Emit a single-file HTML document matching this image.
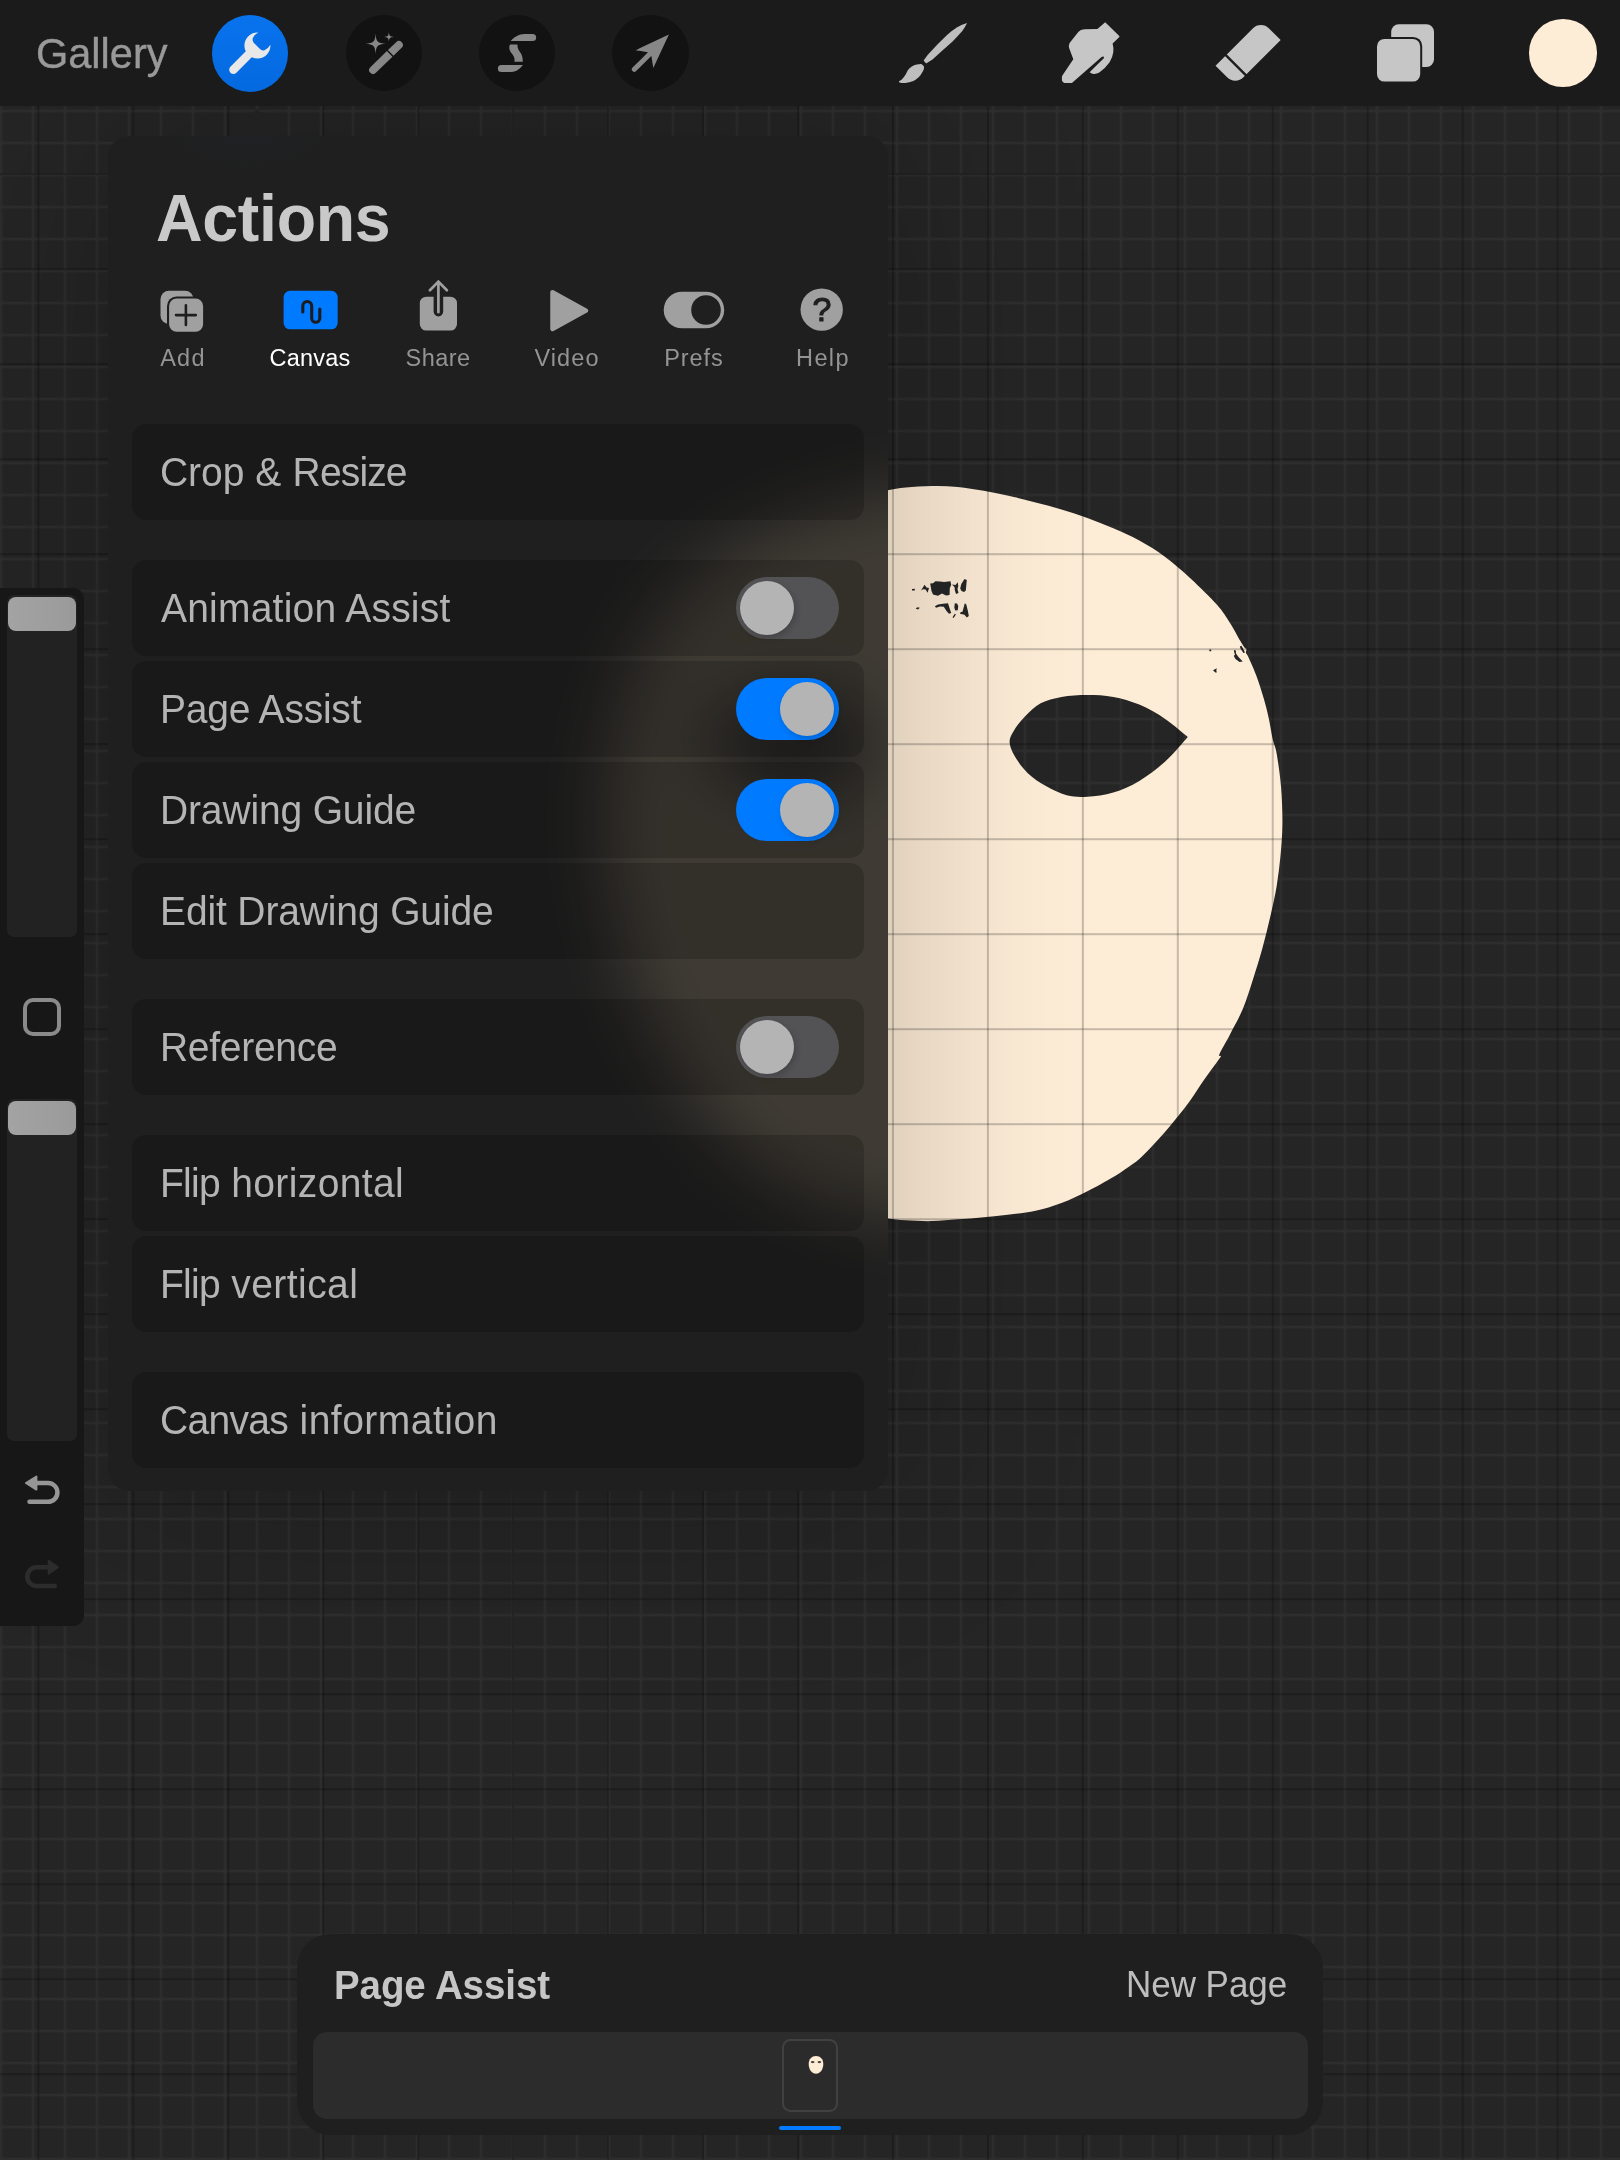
<!DOCTYPE html>
<html lang="en">
<head>
<meta charset="utf-8">
<title>Procreate – Actions</title>
<style>
*{box-sizing:border-box;margin:0;padding:0}
html,body{width:1620px;height:2160px;overflow:hidden;background:#252525}
body{position:relative;font-family:"Liberation Sans",Arial,Helvetica,sans-serif;color:#b4b4b4}
.abs{position:absolute}
.lbl,.tab,h1,h2,#newpage,#gallery,#tabicons{will-change:transform}
#canvas{position:absolute;left:0;top:0;width:1620px;height:2160px}
#topbar{position:absolute;left:0;top:0;width:1620px;height:105.5px;background:#1b1b1b}
#gallery{position:absolute;left:36px;top:28.7px;font-size:41.5px;line-height:48px;color:#999;letter-spacing:0px;-webkit-text-stroke:0.4px #999;transform:scaleY(1.045);transform-origin:0 50%}
.circ{position:absolute;top:14.6px;width:76.4px;height:76.4px;border-radius:50%;background:#121212}
#topicons{position:absolute;left:0;top:0;width:1620px;height:106px}
#swatch{position:absolute;left:1529px;top:19px;width:67.5px;height:67.5px;border-radius:50%;background:#fdecd6}
/* sidebar */
#side{position:absolute;left:0;top:588px;width:84px;height:1037.5px;background:#171717;border-radius:0 11px 11px 0}
.track{position:absolute;left:7px;width:70px;height:342px;background:#222;border-radius:7px}
.knob{position:absolute;left:8px;width:68px;height:34px;background:linear-gradient(90deg,#a3a3a3,#9a9a9a);border-radius:8px}
#sq{position:absolute;left:23px;top:410.2px;width:38px;height:38.3px;border:4px solid #8a8a8a;border-radius:10px}
/* panel */
#panel{position:absolute;left:108px;top:136px;width:780px;height:1355px;border-radius:21px;background:radial-gradient(ellipse 85px 34px at 142px 0px,rgba(40,80,140,0.05),rgba(40,80,140,0) 100%),#1f1f1f;overflow:hidden;}
#pshadow{position:absolute;left:108px;top:136px;width:780px;height:1355px;border-radius:21px;box-shadow:0 0 200px 0 rgba(0,0,0,0.23)}
#arrow{position:absolute;left:229.5px;top:109px;width:0;height:0;border-left:27px solid transparent;border-right:27px solid transparent;border-bottom:27px solid #212121}
#glow{position:absolute;left:0;top:0;width:780px;height:1355px}
h1{position:absolute;left:48px;top:44.5px;font-size:64.5px;line-height:74px;font-weight:700;color:#c9c9c9;letter-spacing:-0.3px;transform:scaleY(1.04);transform-origin:0 50%}
.tab{position:absolute;top:207.5px;font-size:23.5px;line-height:28px;color:#949494;white-space:nowrap;transform:translateX(-50%)}
.tab.act{color:#fff}
#tabicons{position:absolute;left:0;top:0;width:780px;height:230px}
.row{position:absolute;left:24px;width:732px;height:96px;border-radius:14px;background:rgba(0,0,0,0.175)}
.lbl{position:absolute;left:28.4px;top:0.3px;font-size:39px;line-height:96px;transform:scaleY(1.045);transform-origin:0 50%;color:#b4b4b4;white-space:nowrap}
.tog{position:absolute;left:604px;top:17px;width:103px;height:62px;border-radius:31px;background:#535355}
.tog.on{background:#007aff}
.tog i{position:absolute;top:4px;left:4px;width:54px;height:54px;border-radius:50%;background:#b4b4b4;box-shadow:2px 3px 6px rgba(0,0,0,0.18)}
.tog.on i{left:44.2px}
/* page assist */
#pa{position:absolute;left:297px;top:1934px;width:1026px;height:201px;border-radius:34px;background:#1f1f1f}
#pa h2{position:absolute;left:36.9px;top:28.4px;font-size:38.5px;line-height:46px;font-weight:700;color:#c6c6c6;letter-spacing:-0.08px;transform:scaleY(1.045);transform-origin:0 50%}
#newpage{position:absolute;right:36.2px;top:27.6px;font-size:35px;line-height:44px;color:#bdbdbd;letter-spacing:-0.04px;transform:scaleY(1.05);transform-origin:100% 50%}
#strip{position:absolute;left:16px;top:98px;width:994.5px;height:87px;border-radius:14px;background:#2c2c2c}
#thumb{position:absolute;left:485px;top:104.6px;width:56px;height:73.4px;border:2px solid #414141;border-radius:8.5px;background:#2b2b2b}
#bluebar{position:absolute;left:482px;top:191.9px;width:62px;height:4.1px;background:#027bff;border-radius:2px}
</style>
</head>
<body>
<svg id="canvas" viewBox="0 0 1620 2160">
<defs>
<linearGradient id="fshade" gradientUnits="userSpaceOnUse" x1="888" y1="0" x2="1090" y2="0">
<stop offset="0" stop-color="#000" stop-opacity="0.135"/>
<stop offset="0.5" stop-color="#000" stop-opacity="0.055"/>
<stop offset="1" stop-color="#000" stop-opacity="0"/>
</linearGradient>
</defs>
<g fill="#323232">
<g fill-opacity="0.42">
<rect x="-0.7" y="105" width="3.4" height="2055"/>
<rect x="31.3" y="105" width="3.4" height="2055"/>
<rect x="63.3" y="105" width="3.4" height="2055"/>
<rect x="95.3" y="105" width="3.4" height="2055"/>
<rect x="127.3" y="105" width="3.4" height="2055"/>
<rect x="159.3" y="105" width="3.4" height="2055"/>
<rect x="191.3" y="105" width="3.4" height="2055"/>
<rect x="223.3" y="105" width="3.4" height="2055"/>
<rect x="255.3" y="105" width="3.4" height="2055"/>
<rect x="287.3" y="105" width="3.4" height="2055"/>
<rect x="319.3" y="105" width="3.4" height="2055"/>
<rect x="351.3" y="105" width="3.4" height="2055"/>
<rect x="383.3" y="105" width="3.4" height="2055"/>
<rect x="415.3" y="105" width="3.4" height="2055"/>
<rect x="447.3" y="105" width="3.4" height="2055"/>
<rect x="479.3" y="105" width="3.4" height="2055"/>
<rect x="511.3" y="105" width="3.4" height="2055"/>
<rect x="543.3" y="105" width="3.4" height="2055"/>
<rect x="575.3" y="105" width="3.4" height="2055"/>
<rect x="607.3" y="105" width="3.4" height="2055"/>
<rect x="639.3" y="105" width="3.4" height="2055"/>
<rect x="671.3" y="105" width="3.4" height="2055"/>
<rect x="703.3" y="105" width="3.4" height="2055"/>
<rect x="735.3" y="105" width="3.4" height="2055"/>
<rect x="767.3" y="105" width="3.4" height="2055"/>
<rect x="799.3" y="105" width="3.4" height="2055"/>
<rect x="831.3" y="105" width="3.4" height="2055"/>
<rect x="863.3" y="105" width="3.4" height="2055"/>
<rect x="895.3" y="105" width="3.4" height="2055"/>
<rect x="927.3" y="105" width="3.4" height="2055"/>
<rect x="959.3" y="105" width="3.4" height="2055"/>
<rect x="991.3" y="105" width="3.4" height="2055"/>
<rect x="1023.3" y="105" width="3.4" height="2055"/>
<rect x="1055.3" y="105" width="3.4" height="2055"/>
<rect x="1087.3" y="105" width="3.4" height="2055"/>
<rect x="1119.3" y="105" width="3.4" height="2055"/>
<rect x="1151.3" y="105" width="3.4" height="2055"/>
<rect x="1183.3" y="105" width="3.4" height="2055"/>
<rect x="1215.3" y="105" width="3.4" height="2055"/>
<rect x="1247.3" y="105" width="3.4" height="2055"/>
<rect x="1279.3" y="105" width="3.4" height="2055"/>
<rect x="1311.3" y="105" width="3.4" height="2055"/>
<rect x="1343.3" y="105" width="3.4" height="2055"/>
<rect x="1375.3" y="105" width="3.4" height="2055"/>
<rect x="1407.3" y="105" width="3.4" height="2055"/>
<rect x="1439.3" y="105" width="3.4" height="2055"/>
<rect x="1471.3" y="105" width="3.4" height="2055"/>
<rect x="1503.3" y="105" width="3.4" height="2055"/>
<rect x="1535.3" y="105" width="3.4" height="2055"/>
<rect x="1567.3" y="105" width="3.4" height="2055"/>
<rect x="1599.3" y="105" width="3.4" height="2055"/>
<rect x="0" y="109.3" width="1620" height="3.4"/>
<rect x="0" y="141.3" width="1620" height="3.4"/>
<rect x="0" y="173.3" width="1620" height="3.4"/>
<rect x="0" y="205.3" width="1620" height="3.4"/>
<rect x="0" y="237.3" width="1620" height="3.4"/>
<rect x="0" y="269.3" width="1620" height="3.4"/>
<rect x="0" y="301.3" width="1620" height="3.4"/>
<rect x="0" y="333.3" width="1620" height="3.4"/>
<rect x="0" y="365.3" width="1620" height="3.4"/>
<rect x="0" y="397.3" width="1620" height="3.4"/>
<rect x="0" y="429.3" width="1620" height="3.4"/>
<rect x="0" y="461.3" width="1620" height="3.4"/>
<rect x="0" y="493.3" width="1620" height="3.4"/>
<rect x="0" y="525.3" width="1620" height="3.4"/>
<rect x="0" y="557.3" width="1620" height="3.4"/>
<rect x="0" y="589.3" width="1620" height="3.4"/>
<rect x="0" y="621.3" width="1620" height="3.4"/>
<rect x="0" y="653.3" width="1620" height="3.4"/>
<rect x="0" y="685.3" width="1620" height="3.4"/>
<rect x="0" y="717.3" width="1620" height="3.4"/>
<rect x="0" y="749.3" width="1620" height="3.4"/>
<rect x="0" y="781.3" width="1620" height="3.4"/>
<rect x="0" y="813.3" width="1620" height="3.4"/>
<rect x="0" y="845.3" width="1620" height="3.4"/>
<rect x="0" y="877.3" width="1620" height="3.4"/>
<rect x="0" y="909.3" width="1620" height="3.4"/>
<rect x="0" y="941.3" width="1620" height="3.4"/>
<rect x="0" y="973.3" width="1620" height="3.4"/>
<rect x="0" y="1005.3" width="1620" height="3.4"/>
<rect x="0" y="1037.3" width="1620" height="3.4"/>
<rect x="0" y="1069.3" width="1620" height="3.4"/>
<rect x="0" y="1101.3" width="1620" height="3.4"/>
<rect x="0" y="1133.3" width="1620" height="3.4"/>
<rect x="0" y="1165.3" width="1620" height="3.4"/>
<rect x="0" y="1197.3" width="1620" height="3.4"/>
<rect x="0" y="1229.3" width="1620" height="3.4"/>
<rect x="0" y="1261.3" width="1620" height="3.4"/>
<rect x="0" y="1293.3" width="1620" height="3.4"/>
<rect x="0" y="1325.3" width="1620" height="3.4"/>
<rect x="0" y="1357.3" width="1620" height="3.4"/>
<rect x="0" y="1389.3" width="1620" height="3.4"/>
<rect x="0" y="1421.3" width="1620" height="3.4"/>
<rect x="0" y="1453.3" width="1620" height="3.4"/>
<rect x="0" y="1485.3" width="1620" height="3.4"/>
<rect x="0" y="1517.3" width="1620" height="3.4"/>
<rect x="0" y="1549.3" width="1620" height="3.4"/>
<rect x="0" y="1581.3" width="1620" height="3.4"/>
<rect x="0" y="1613.3" width="1620" height="3.4"/>
<rect x="0" y="1645.3" width="1620" height="3.4"/>
<rect x="0" y="1677.3" width="1620" height="3.4"/>
<rect x="0" y="1709.3" width="1620" height="3.4"/>
<rect x="0" y="1741.3" width="1620" height="3.4"/>
<rect x="0" y="1773.3" width="1620" height="3.4"/>
<rect x="0" y="1805.3" width="1620" height="3.4"/>
<rect x="0" y="1837.3" width="1620" height="3.4"/>
<rect x="0" y="1869.3" width="1620" height="3.4"/>
<rect x="0" y="1901.3" width="1620" height="3.4"/>
<rect x="0" y="1933.3" width="1620" height="3.4"/>
<rect x="0" y="1965.3" width="1620" height="3.4"/>
<rect x="0" y="1997.3" width="1620" height="3.4"/>
<rect x="0" y="2029.3" width="1620" height="3.4"/>
<rect x="0" y="2061.3" width="1620" height="3.4"/>
<rect x="0" y="2093.3" width="1620" height="3.4"/>
<rect x="0" y="2125.3" width="1620" height="3.4"/>
<rect x="0" y="2157.3" width="1620" height="3.4"/>
</g><g fill-opacity="0.62">
<rect x="0.1" y="105" width="1.8" height="2055"/>
<rect x="32.1" y="105" width="1.8" height="2055"/>
<rect x="64.1" y="105" width="1.8" height="2055"/>
<rect x="96.1" y="105" width="1.8" height="2055"/>
<rect x="128.1" y="105" width="1.8" height="2055"/>
<rect x="160.1" y="105" width="1.8" height="2055"/>
<rect x="192.1" y="105" width="1.8" height="2055"/>
<rect x="224.1" y="105" width="1.8" height="2055"/>
<rect x="256.1" y="105" width="1.8" height="2055"/>
<rect x="288.1" y="105" width="1.8" height="2055"/>
<rect x="320.1" y="105" width="1.8" height="2055"/>
<rect x="352.1" y="105" width="1.8" height="2055"/>
<rect x="384.1" y="105" width="1.8" height="2055"/>
<rect x="416.1" y="105" width="1.8" height="2055"/>
<rect x="448.1" y="105" width="1.8" height="2055"/>
<rect x="480.1" y="105" width="1.8" height="2055"/>
<rect x="512.1" y="105" width="1.8" height="2055"/>
<rect x="544.1" y="105" width="1.8" height="2055"/>
<rect x="576.1" y="105" width="1.8" height="2055"/>
<rect x="608.1" y="105" width="1.8" height="2055"/>
<rect x="640.1" y="105" width="1.8" height="2055"/>
<rect x="672.1" y="105" width="1.8" height="2055"/>
<rect x="704.1" y="105" width="1.8" height="2055"/>
<rect x="736.1" y="105" width="1.8" height="2055"/>
<rect x="768.1" y="105" width="1.8" height="2055"/>
<rect x="800.1" y="105" width="1.8" height="2055"/>
<rect x="832.1" y="105" width="1.8" height="2055"/>
<rect x="864.1" y="105" width="1.8" height="2055"/>
<rect x="896.1" y="105" width="1.8" height="2055"/>
<rect x="928.1" y="105" width="1.8" height="2055"/>
<rect x="960.1" y="105" width="1.8" height="2055"/>
<rect x="992.1" y="105" width="1.8" height="2055"/>
<rect x="1024.1" y="105" width="1.8" height="2055"/>
<rect x="1056.1" y="105" width="1.8" height="2055"/>
<rect x="1088.1" y="105" width="1.8" height="2055"/>
<rect x="1120.1" y="105" width="1.8" height="2055"/>
<rect x="1152.1" y="105" width="1.8" height="2055"/>
<rect x="1184.1" y="105" width="1.8" height="2055"/>
<rect x="1216.1" y="105" width="1.8" height="2055"/>
<rect x="1248.1" y="105" width="1.8" height="2055"/>
<rect x="1280.1" y="105" width="1.8" height="2055"/>
<rect x="1312.1" y="105" width="1.8" height="2055"/>
<rect x="1344.1" y="105" width="1.8" height="2055"/>
<rect x="1376.1" y="105" width="1.8" height="2055"/>
<rect x="1408.1" y="105" width="1.8" height="2055"/>
<rect x="1440.1" y="105" width="1.8" height="2055"/>
<rect x="1472.1" y="105" width="1.8" height="2055"/>
<rect x="1504.1" y="105" width="1.8" height="2055"/>
<rect x="1536.1" y="105" width="1.8" height="2055"/>
<rect x="1568.1" y="105" width="1.8" height="2055"/>
<rect x="1600.1" y="105" width="1.8" height="2055"/>
<rect x="0" y="110.1" width="1620" height="1.8"/>
<rect x="0" y="142.1" width="1620" height="1.8"/>
<rect x="0" y="174.1" width="1620" height="1.8"/>
<rect x="0" y="206.1" width="1620" height="1.8"/>
<rect x="0" y="238.1" width="1620" height="1.8"/>
<rect x="0" y="270.1" width="1620" height="1.8"/>
<rect x="0" y="302.1" width="1620" height="1.8"/>
<rect x="0" y="334.1" width="1620" height="1.8"/>
<rect x="0" y="366.1" width="1620" height="1.8"/>
<rect x="0" y="398.1" width="1620" height="1.8"/>
<rect x="0" y="430.1" width="1620" height="1.8"/>
<rect x="0" y="462.1" width="1620" height="1.8"/>
<rect x="0" y="494.1" width="1620" height="1.8"/>
<rect x="0" y="526.1" width="1620" height="1.8"/>
<rect x="0" y="558.1" width="1620" height="1.8"/>
<rect x="0" y="590.1" width="1620" height="1.8"/>
<rect x="0" y="622.1" width="1620" height="1.8"/>
<rect x="0" y="654.1" width="1620" height="1.8"/>
<rect x="0" y="686.1" width="1620" height="1.8"/>
<rect x="0" y="718.1" width="1620" height="1.8"/>
<rect x="0" y="750.1" width="1620" height="1.8"/>
<rect x="0" y="782.1" width="1620" height="1.8"/>
<rect x="0" y="814.1" width="1620" height="1.8"/>
<rect x="0" y="846.1" width="1620" height="1.8"/>
<rect x="0" y="878.1" width="1620" height="1.8"/>
<rect x="0" y="910.1" width="1620" height="1.8"/>
<rect x="0" y="942.1" width="1620" height="1.8"/>
<rect x="0" y="974.1" width="1620" height="1.8"/>
<rect x="0" y="1006.1" width="1620" height="1.8"/>
<rect x="0" y="1038.1" width="1620" height="1.8"/>
<rect x="0" y="1070.1" width="1620" height="1.8"/>
<rect x="0" y="1102.1" width="1620" height="1.8"/>
<rect x="0" y="1134.1" width="1620" height="1.8"/>
<rect x="0" y="1166.1" width="1620" height="1.8"/>
<rect x="0" y="1198.1" width="1620" height="1.8"/>
<rect x="0" y="1230.1" width="1620" height="1.8"/>
<rect x="0" y="1262.1" width="1620" height="1.8"/>
<rect x="0" y="1294.1" width="1620" height="1.8"/>
<rect x="0" y="1326.1" width="1620" height="1.8"/>
<rect x="0" y="1358.1" width="1620" height="1.8"/>
<rect x="0" y="1390.1" width="1620" height="1.8"/>
<rect x="0" y="1422.1" width="1620" height="1.8"/>
<rect x="0" y="1454.1" width="1620" height="1.8"/>
<rect x="0" y="1486.1" width="1620" height="1.8"/>
<rect x="0" y="1518.1" width="1620" height="1.8"/>
<rect x="0" y="1550.1" width="1620" height="1.8"/>
<rect x="0" y="1582.1" width="1620" height="1.8"/>
<rect x="0" y="1614.1" width="1620" height="1.8"/>
<rect x="0" y="1646.1" width="1620" height="1.8"/>
<rect x="0" y="1678.1" width="1620" height="1.8"/>
<rect x="0" y="1710.1" width="1620" height="1.8"/>
<rect x="0" y="1742.1" width="1620" height="1.8"/>
<rect x="0" y="1774.1" width="1620" height="1.8"/>
<rect x="0" y="1806.1" width="1620" height="1.8"/>
<rect x="0" y="1838.1" width="1620" height="1.8"/>
<rect x="0" y="1870.1" width="1620" height="1.8"/>
<rect x="0" y="1902.1" width="1620" height="1.8"/>
<rect x="0" y="1934.1" width="1620" height="1.8"/>
<rect x="0" y="1966.1" width="1620" height="1.8"/>
<rect x="0" y="1998.1" width="1620" height="1.8"/>
<rect x="0" y="2030.1" width="1620" height="1.8"/>
<rect x="0" y="2062.1" width="1620" height="1.8"/>
<rect x="0" y="2094.1" width="1620" height="1.8"/>
<rect x="0" y="2126.1" width="1620" height="1.8"/>
<rect x="0" y="2158.1" width="1620" height="1.8"/>
</g>
</g>
<path d="M860.0 494.5C862.3 494.1 869.4 492.9 874.0 492.2C878.6 491.5 882.5 491.0 887.8 490.2C893.1 489.4 898.5 488.3 905.9 487.6C913.2 486.9 923.2 486.2 931.9 486.1C940.5 486.0 949.2 486.1 957.8 486.9C966.4 487.7 975.1 489.2 983.7 490.7C992.3 492.2 1001.0 493.9 1009.6 495.9C1018.2 497.8 1026.9 500.1 1035.6 502.4C1044.2 504.6 1052.9 506.8 1061.5 509.4C1070.1 512.0 1078.8 514.9 1087.4 518.0C1096.0 521.1 1104.7 524.5 1113.3 528.3C1121.9 532.0 1130.6 535.7 1139.3 540.5C1148.0 545.3 1156.6 550.5 1165.2 556.9C1173.8 563.3 1182.5 570.9 1191.1 578.9C1199.7 586.9 1210.5 597.4 1217.0 604.8C1223.5 612.1 1226.1 617.0 1230.0 623.0C1233.9 629.0 1238.0 637.0 1240.4 641.1C1242.8 645.2 1243.5 646.2 1244.5 647.5C1245.5 648.8 1246.2 648.1 1246.4 649.0C1246.7 649.9 1245.7 651.7 1246.0 653.0C1246.3 654.3 1246.5 653.1 1248.2 656.7C1249.9 660.3 1253.4 667.9 1256.0 674.8C1258.6 681.7 1261.5 690.9 1263.7 698.2C1265.9 705.6 1267.4 712.0 1268.9 718.9C1270.4 725.8 1271.5 733.8 1272.8 739.6C1274.1 745.4 1275.3 745.7 1276.7 753.7C1278.1 761.7 1280.1 775.7 1281.1 787.4C1282.0 799.1 1282.5 812.5 1282.4 823.7C1282.3 834.9 1281.5 844.4 1280.6 854.8C1279.6 865.2 1278.4 875.5 1276.7 885.9C1275.0 896.3 1272.6 906.6 1270.2 917.0C1267.8 927.4 1265.2 938.0 1262.4 948.2C1259.6 958.4 1256.6 968.0 1253.4 978.0C1250.2 988.0 1246.9 999.1 1243.0 1008.5C1239.1 1017.9 1233.9 1026.8 1230.0 1034.4C1226.1 1042.0 1221.0 1050.4 1219.5 1054.0C1218.0 1057.6 1221.4 1054.7 1221.0 1056.0C1220.6 1057.3 1219.8 1058.0 1217.0 1062.0C1214.2 1066.0 1208.4 1073.6 1204.1 1079.8C1199.8 1086.0 1195.4 1093.2 1191.1 1099.3C1186.8 1105.3 1182.5 1110.7 1178.2 1116.1C1173.9 1121.5 1169.5 1126.7 1165.2 1131.7C1160.9 1136.7 1156.5 1141.4 1152.2 1145.9C1147.9 1150.4 1143.6 1155.1 1139.3 1158.9C1135.0 1162.7 1130.6 1165.5 1126.3 1168.5C1122.0 1171.5 1119.8 1173.2 1113.3 1177.0C1106.8 1180.8 1096.0 1187.0 1087.4 1191.3C1078.8 1195.6 1070.1 1199.8 1061.5 1203.0C1052.9 1206.2 1044.2 1208.9 1035.6 1210.8C1026.9 1212.7 1018.2 1213.5 1009.6 1214.6C1001.0 1215.7 992.3 1216.4 983.7 1217.2C975.1 1218.0 966.4 1218.7 957.8 1219.3C949.2 1219.9 940.5 1220.9 931.9 1221.1C923.2 1221.3 913.2 1220.7 905.9 1220.3C898.5 1219.9 893.1 1219.1 887.8 1218.5C882.5 1217.9 878.6 1217.4 874.0 1216.8C869.4 1216.2 862.3 1215.3 860.0 1215.0Z M1187.8 736.9C1184.0 733.9 1173.3 724.3 1165.2 718.9C1157.1 713.5 1148.0 708.3 1139.3 704.6C1130.6 700.9 1121.9 698.5 1113.3 696.9C1104.7 695.3 1096.0 695.0 1087.4 695.0C1078.8 695.0 1069.3 695.5 1061.5 696.9C1053.7 698.3 1046.8 700.1 1040.7 703.3C1034.7 706.5 1029.7 711.8 1025.2 716.3C1020.8 720.8 1016.6 726.1 1014.0 730.4C1011.4 734.7 1009.5 737.7 1009.6 742.0C1009.7 746.3 1011.8 751.1 1014.8 756.3C1017.8 761.5 1022.6 768.2 1027.8 773.2C1033.0 778.2 1039.4 782.4 1045.9 786.1C1052.4 789.8 1059.8 793.4 1066.7 795.2C1073.6 797.0 1079.6 797.1 1087.4 796.7C1095.2 796.3 1104.7 795.2 1113.3 792.6C1121.9 790.0 1130.6 786.1 1139.3 780.9C1148.0 775.7 1157.1 768.8 1165.2 761.5C1173.3 754.2 1184.0 741.0 1187.8 736.9Z" fill="#fdecd6" fill-rule="evenodd"/>
<path d="M912.0 589.0L914.8 588.7L914.8 590.6L912.0 590.6Z M921.0 590.5L924.6 584.7L926.5 587.5L929.0 588.0L927.6 592.7L925.6 589.5L923.0 589.2Z M930.2 583.5L933.0 583.2L935.5 581.2L940.0 581.6L944.0 582.0L950.5 581.2L951.2 585.0L949.8 588.0L949.6 595.0L946.0 595.6L942.0 593.4L938.0 595.8L933.0 594.6L931.5 591.0Z M951.9 584.5L955.5 585.0L957.7 582.2L958.3 586.0L957.5 589.0L958.5 593.0L956.0 594.0L954.8 590.0L954.5 587.0Z M964.5 579.0L966.8 580.0L965.8 590.5L964.0 592.0L961.5 591.0L960.2 588.5L961.3 584.0Z M915.7 608.6L917.5 607.2L919.8 607.8L918.0 609.4Z M934.9 606.3L938.0 604.5L943.0 603.8L948.0 603.2L949.5 608.0L951.2 613.0L949.0 613.7L946.5 611.0L943.8 606.8L940.0 606.6L936.0 607.8Z M954.8 603.2L957.0 603.4L958.3 606.0L957.7 610.2L955.2 610.6L954.3 607.5Z M954.8 613.7L955.9 614.5L953.6 618.0L952.5 617.3Z M964.8 603.2L966.3 604.5L968.0 611.5L968.8 616.0L966.8 617.4L964.5 614.8L960.0 613.8L960.5 612.3L962.5 611.8Z M1234.5 649.8L1235.8 650.5L1236.0 653.5L1238.5 657.0L1242.7 661.5L1239.5 662.1L1235.5 659.0L1233.8 656.0L1235.0 654.5L1233.9 651.5Z M1213.0 670.3L1216.8 668.3L1216.3 670.6L1216.8 672.6L1215.3 672.4Z M1209.4 649.4L1211.2 649.4L1211.2 651.3L1209.4 651.3Z M1239.8 646.5L1241.5 645.8L1243.0 648.5L1245.0 652.5L1243.3 652.9L1242.0 650.7L1240.6 648.8Z" fill="#262626"/>
<g fill="#000" fill-opacity="0.215">
<rect x="37.40" y="105" width="2" height="2055"/>
<rect x="132.35" y="105" width="2" height="2055"/>
<rect x="227.30" y="105" width="2" height="2055"/>
<rect x="322.25" y="105" width="2" height="2055"/>
<rect x="417.20" y="105" width="2" height="2055"/>
<rect x="512.15" y="105" width="2" height="2055"/>
<rect x="607.10" y="105" width="2" height="2055"/>
<rect x="702.05" y="105" width="2" height="2055"/>
<rect x="797.00" y="105" width="2" height="2055"/>
<rect x="891.95" y="105" width="2" height="2055"/>
<rect x="986.90" y="105" width="2" height="2055"/>
<rect x="1081.85" y="105" width="2" height="2055"/>
<rect x="1176.80" y="105" width="2" height="2055"/>
<rect x="1271.75" y="105" width="2" height="2055"/>
<rect x="1366.70" y="105" width="2" height="2055"/>
<rect x="1461.65" y="105" width="2" height="2055"/>
<rect x="1556.60" y="105" width="2" height="2055"/>
<rect x="0" y="173.20" width="1620" height="2"/>
<rect x="0" y="268.20" width="1620" height="2"/>
<rect x="0" y="363.20" width="1620" height="2"/>
<rect x="0" y="458.20" width="1620" height="2"/>
<rect x="0" y="553.20" width="1620" height="2"/>
<rect x="0" y="648.20" width="1620" height="2"/>
<rect x="0" y="743.20" width="1620" height="2"/>
<rect x="0" y="838.20" width="1620" height="2"/>
<rect x="0" y="933.20" width="1620" height="2"/>
<rect x="0" y="1028.20" width="1620" height="2"/>
<rect x="0" y="1123.20" width="1620" height="2"/>
<rect x="0" y="1218.20" width="1620" height="2"/>
<rect x="0" y="1313.20" width="1620" height="2"/>
<rect x="0" y="1408.20" width="1620" height="2"/>
<rect x="0" y="1503.20" width="1620" height="2"/>
<rect x="0" y="1598.20" width="1620" height="2"/>
<rect x="0" y="1693.20" width="1620" height="2"/>
<rect x="0" y="1788.20" width="1620" height="2"/>
<rect x="0" y="1883.20" width="1620" height="2"/>
<rect x="0" y="1978.20" width="1620" height="2"/>
<rect x="0" y="2073.20" width="1620" height="2"/>
</g>
</svg>

<div id="pshadow"></div>
<div id="topbar"></div>
<div id="gallery">Gallery</div>
<div class="circ" style="left:211.7px;top:14.75px;width:76.8px;height:76.8px;background:linear-gradient(180deg,#0873ee,#0469df)"></div>
<div class="circ" style="left:345.6px"></div>
<div class="circ" style="left:478.9px"></div>
<div class="circ" style="left:612.4px"></div>
<svg id="topicons" viewBox="0 0 1620 106">
<!-- wrench -->
<g fill="#e8e8e8" stroke="none">
<path d="M258.2 32.6A13 13 0 1 0 270.4 44.8Q268 49 264.5 50.3Q261.8 51 260 49L253.5 42.5Q251.8 40.5 252.8 38Q254.5 34.5 258.2 32.6Z"/>
<path d="M233.4 69.7L250.5 52.5" stroke="#e8e8e8" stroke-width="8.4" stroke-linecap="round"/>
</g>
<!-- wand -->
<g fill="#878787">
<g transform="translate(373.1 70) rotate(-44.1)">
<path d="M0 -3.95H23.1V3.95H0A3.95 3.95 0 0 1 0 -3.95Z"/>
<path d="M24.5 -3.95H35.9A3.95 3.95 0 0 1 35.9 3.95H24.5Z"/>
</g>
<path d="M375.60 33.50C376.10 41.70 377.60 43.20 385.80 43.70C377.60 44.20 376.10 45.70 375.60 53.90C375.10 45.70 373.60 44.20 365.40 43.70C373.60 43.20 375.10 41.70 375.60 33.50Z"/>
<path d="M388.90 32.10C389.20 36.00 389.90 36.70 393.80 37.00C389.90 37.30 389.20 38.00 388.90 41.90C388.60 38.00 387.90 37.30 384.00 37.00C387.90 36.70 388.60 36.00 388.90 32.10Z"/>
</g>
<!-- S -->
<g fill="#878787">
<path d="M510.7 41Q514 36.5 520.3 34.4Q522.5 33.9 524.5 33.9H532.6A3.55 3.55 0 0 1 532.6 41Z"/>
<path d="M510.3 44.5H517.4Q517.2 47 518.5 49.7Q520.3 52.5 521.3 54Q522.9 57 522.9 61.7H514.4Q515.2 59.5 513.7 56.3Q511.5 53 510.7 52.3Q508.6 48.5 509.4 46Q509.6 44.5 510.3 44.5Z"/>
<path d="M522.9 65Q520.5 68.5 516.6 70.8Q513 72.1 510.7 72.1H501.4A3.55 3.55 0 0 1 501.4 65Z"/>
</g>
<!-- arrow -->
<g fill="#878787">
<path d="M668.9 34.5L635.6 50.2L647.6 52.3L651.3 55.6L653.3 68Z"/>
<path d="M634.3 69.3L650 53.8" stroke="#878787" stroke-width="5" stroke-linecap="round"/>
</g>
<!-- brush -->
<g fill="#bebebe">
<path d="M967.1 23.1Q962 24.5 957.2 27.3Q952 30.5 947.3 34.8L937.4 44.6L927.6 55L923.6 60.4L926.1 63.6L932.5 59.4L942.4 50.6L952.3 41.7Q957.5 36.5 962.1 31.3Q965 27.5 967.1 23.1Z"/>
<path d="M922.6 64.9Q924.3 66 924.1 67.8Q923.8 70 922.6 71.8Q921 75 918.7 77.2Q916 79.7 912.8 81.2Q909.5 82.5 905.3 82.9Q902.5 83.2 900.4 82.7Q898.7 82.2 898.9 81.2Q901.5 80 902.9 78.2Q904.6 76.3 905.8 74.3Q906.8 72.3 907.8 70.3Q909.3 67.8 911.8 66.4Q914 65 916.7 64.4Q919 63.9 920.7 63.9Q921.8 64.1 922.6 64.9Z"/>
</g>
<!-- smudge -->
<g fill="#c6c6c6">
<path d="M1105.2 22.2L1119.3 35.9Q1119.8 36.6 1119.1 37.3L1112.6 43.6Q1113.8 48 1113.3 51.9Q1112.6 57.5 1109.6 62.2Q1105 68.5 1099.3 72.6Q1096.5 74.3 1093.3 74Q1091 73.6 1089.6 72.3L1103.8 58.2Q1104.4 57 1103.4 56.5Q1102.5 56.2 1101.6 57L1071.9 83H1064.5Q1062.3 82.5 1061.9 80.3L1061.9 77Q1062 75.8 1062.7 75L1073.3 59.3L1069.3 48.5Q1068.3 45.5 1069.6 43L1078.5 31.8Q1080.5 29.6 1084.4 29.2L1097.4 28.9Z"/>
</g>
<!-- eraser -->
<g transform="translate(1248.1 52.9) rotate(-45)" fill="#c6c6c6">
<path d="M-32.1 -14H20.6A11.5 11.5 0 0 1 32.1 -2.5V14H-20.6A11.5 11.5 0 0 1 -32.1 2.5Z"/>
<rect x="-18.6" y="-14.5" width="2.4" height="29" fill="#1c1c1c"/>
</g>
<!-- layers -->
<g fill="#c6c6c6">
<rect x="1391.2" y="24.2" width="42.8" height="42.8" rx="7.5"/>
<rect x="1375" y="36.9" width="47.2" height="46.7" rx="9" fill="#1c1c1c"/>
<rect x="1377" y="38.9" width="43.2" height="42.7" rx="7.5"/>
</g>
</svg>
<div id="swatch"></div>

<div id="side">
<div class="track" style="top:7px"></div>
<div class="knob" style="top:9px"></div>
<div id="sq"></div>
<div class="track" style="top:511px"></div>
<div class="knob" style="top:513px"></div>
<svg class="abs" style="left:0;top:0" width="84" height="1037" viewBox="0 588 84 1037">
<g fill="none" stroke="#969696" stroke-width="4.5" stroke-linecap="round">
<path d="M36 1483H48A9.4 9.4 0 0 1 48 1501.8H29.5"/>
<path d="M25.9 1483L36.4 1476.6V1489.6Z" fill="#969696" stroke-width="2" stroke-linejoin="round"/>
</g>
<g fill="none" stroke="#2c2c2c" stroke-width="4.5" stroke-linecap="round">
<path d="M48.5 1567.3H36.6A9.35 9.35 0 0 0 36.6 1586H54.8"/>
<path d="M57.9 1567.3L48.7 1560.8V1573.7Z" fill="#2c2c2c" stroke-width="2" stroke-linejoin="round"/>
</g>
</svg>
</div>

<div id="arrow"></div>
<div id="panel">
<svg id="glow" viewBox="108 136 780 1355">
<defs><filter id="blur" x="-30%" y="-30%" width="160%" height="160%"><feGaussianBlur stdDeviation="34"/></filter></defs>
<path d="M943.0 486.1L957.8 486.9L983.7 490.7L1009.6 495.9L1035.6 502.4L1061.5 509.4L1087.4 518.0L1113.3 528.3L1139.3 540.5L1165.2 556.9L1191.1 578.9L1217.0 604.8L1230.0 623.0L1240.4 641.1L1244.5 647.5L1246.4 649.0L1246.0 653.0L1248.2 656.7L1256.0 674.8L1263.7 698.2L1268.9 718.9L1272.8 739.6L1276.7 753.7L1281.1 787.4L1282.4 823.7L1280.6 854.8L1276.7 885.9L1270.2 917.0L1262.4 948.2L1253.4 978.0L1243.0 1008.5L1230.0 1034.4L1219.5 1054.0L1221.0 1056.0L1217.0 1062.0L1204.1 1079.8L1191.1 1099.3L1178.2 1116.1L1165.2 1131.7L1152.2 1145.9L1139.3 1158.9L1126.3 1168.5L1113.3 1177.0L1087.4 1191.3L1061.5 1203.0L1035.6 1210.8L1009.6 1214.6L983.7 1217.2L957.8 1219.3L943.0 1221.1L928.2 1219.3L902.3 1217.2L876.4 1214.6L850.4 1210.8L824.5 1203.0L798.6 1191.3L772.7 1177.0L759.7 1168.5L746.7 1158.9L733.8 1145.9L720.8 1131.7L707.8 1116.1L694.9 1099.3L681.9 1079.8L669.0 1062.0L665.0 1056.0L666.5 1054.0L656.0 1034.4L643.0 1008.5L632.6 978.0L623.6 948.2L615.8 917.0L609.3 885.9L605.4 854.8L603.6 823.7L604.9 787.4L609.3 753.7L613.2 739.6L617.1 718.9L622.3 698.2L630.0 674.8L637.8 656.7L640.0 653.0L639.6 649.0L641.5 647.5L645.6 641.1L656.0 623.0L669.0 604.8L694.9 578.9L720.8 556.9L746.7 540.5L772.7 528.3L798.6 518.0L824.5 509.4L850.4 502.4L876.4 495.9L902.3 490.7L928.2 486.9Z M1187.8 736.9C1184.0 733.9 1173.3 724.3 1165.2 718.9C1157.1 713.5 1148.0 708.3 1139.3 704.6C1130.6 700.9 1121.9 698.5 1113.3 696.9C1104.7 695.3 1096.0 695.0 1087.4 695.0C1078.8 695.0 1069.3 695.5 1061.5 696.9C1053.7 698.3 1046.8 700.1 1040.7 703.3C1034.7 706.5 1029.7 711.8 1025.2 716.3C1020.8 720.8 1016.6 726.1 1014.0 730.4C1011.4 734.7 1009.5 737.7 1009.6 742.0C1009.7 746.3 1011.8 751.1 1014.8 756.3C1017.8 761.5 1022.6 768.2 1027.8 773.2C1033.0 778.2 1039.4 782.4 1045.9 786.1C1052.4 789.8 1059.8 793.4 1066.7 795.2C1073.6 797.0 1079.6 797.1 1087.4 796.7C1095.2 796.3 1104.7 795.2 1113.3 792.6C1121.9 790.0 1130.6 786.1 1139.3 780.9C1148.0 775.7 1157.1 768.8 1165.2 761.5C1173.3 754.2 1184.0 741.0 1187.8 736.9Z M698.2 736.9C702.0 733.9 712.7 724.3 720.8 718.9C728.9 713.5 738.1 708.3 746.7 704.6C755.4 700.9 764.1 698.5 772.7 696.9C781.4 695.3 790.0 695.0 798.6 695.0C807.2 695.0 816.7 695.5 824.5 696.9C832.3 698.3 839.2 700.1 845.3 703.3C851.3 706.5 856.3 711.8 860.8 716.3C865.2 720.8 869.4 726.1 872.0 730.4C874.6 734.7 876.5 737.7 876.4 742.0C876.3 746.3 874.2 751.1 871.2 756.3C868.2 761.5 863.4 768.2 858.2 773.2C853.0 778.2 846.6 782.4 840.1 786.1C833.6 789.8 826.2 793.4 819.3 795.2C812.4 797.0 806.4 797.1 798.6 796.7C790.8 796.3 781.4 795.2 772.7 792.6C764.1 790.0 755.4 786.1 746.7 780.9C738.1 775.7 728.9 768.8 720.8 761.5C712.7 754.2 702.0 741.0 698.2 736.9Z" fill="#fde1b1" fill-rule="evenodd" opacity="0.144" filter="url(#blur)"/>
</svg>
<h1>Actions</h1>
<svg id="tabicons" viewBox="108 136 780 230">
<!-- add -->
<g fill="#a0a0a0">
<rect x="160.5" y="290.8" width="33" height="33.2" rx="8.5"/>
<rect x="167" y="296.4" width="38.2" height="37.5" rx="9.5" fill="#1f1f1f"/>
<rect x="169.1" y="298.5" width="34" height="33.3" rx="7.5"/>
<path d="M176 315.1H195.8M185.9 305.2V325" stroke="#1f1f1f" stroke-width="2.6" stroke-linecap="round"/>
</g>
<!-- canvas -->
<rect x="283.6" y="290.8" width="54.1" height="38.5" rx="6.5" fill="#007aff"/>
<path d="M302.8 312V305.9a4.45 4.45 0 0 1 8.9 0V318.2a4.05 4.05 0 0 0 8.1 0V309" fill="none" stroke="#1c1c1e" stroke-width="3.1" stroke-linecap="round"/>
<!-- share -->
<g fill="#a0a0a0">
<path d="M426.3 296.7H433.6V311.6a4.8 4.8 0 0 0 9.6 0V296.7H450.5A6.5 6.5 0 0 1 457 303.2V324.1A6.5 6.5 0 0 1 450.5 330.6H426.3A6.5 6.5 0 0 1 419.8 324.1V303.2A6.5 6.5 0 0 1 426.3 296.7Z"/>
<path d="M438.4 312.2V282.2M429.9 290.3L438.4 281.6L446.9 290.3" fill="none" stroke="#a0a0a0" stroke-width="2.7" stroke-linecap="round" stroke-linejoin="miter"/>
</g>
<!-- video -->
<path d="M552.5 292.3L586 310.6L552.5 329Z" fill="#a0a0a0" stroke="#a0a0a0" stroke-width="4.5" stroke-linejoin="round"/>
<!-- prefs -->
<rect x="663.7" y="291.7" width="60.5" height="36.6" rx="18.3" fill="#a0a0a0"/>
<circle cx="706" cy="310" r="14.8" fill="#1f1f1f"/>
<!-- help -->
<circle cx="821.7" cy="309.6" r="21.2" fill="#a0a0a0"/>
<text x="821.9" y="320.9" font-family="Liberation Sans, Arial, sans-serif" font-weight="400" font-size="34" text-anchor="middle" fill="#1f1f1f" stroke="#1f1f1f" stroke-width="1.1" stroke-linejoin="round">?</text>
</svg>
<div class="tab" style="left:74.95000000000002px;letter-spacing:1.3px">Add</div>
<div class="tab act" style="left:202.1px;letter-spacing:0.2px">Canvas</div>
<div class="tab" style="left:329.725px;letter-spacing:0.45px">Share</div>
<div class="tab" style="left:459.15000000000003px;letter-spacing:1.1px">Video</div>
<div class="tab" style="left:586.475px;letter-spacing:0.95px">Prefs</div>
<div class="tab" style="left:715.0px;letter-spacing:1.4px">Help</div>
<div class="row" style="top:288px"><span class="lbl" style="letter-spacing:0px;margin-left:0px"><span style="letter-spacing:-0.05px">Crop </span><span style="letter-spacing:0.3px">&amp; </span><span style="letter-spacing:-0.85px">Resize</span></span></div>
<div class="row" style="top:424px"><span class="lbl" style="letter-spacing:0.21px;margin-left:0.6px">Animation Assist</span><span class="tog off"><i></i></span></div>
<div class="row" style="top:525px"><span class="lbl" style="letter-spacing:-0.23px;margin-left:0px">Page Assist</span><span class="tog on"><i></i></span></div>
<div class="row" style="top:626px"><span class="lbl" style="letter-spacing:-0.15px;margin-left:0px">Drawing Guide</span><span class="tog on"><i></i></span></div>
<div class="row" style="top:727px"><span class="lbl" style="letter-spacing:-0.135px;margin-left:0px">Edit Drawing Guide</span></div>
<div class="row" style="top:863px"><span class="lbl" style="letter-spacing:-0.29px;margin-left:0px">Reference</span><span class="tog off"><i></i></span></div>
<div class="row" style="top:999px"><span class="lbl" style="letter-spacing:0px;margin-left:0px"><span style="letter-spacing:-0.7px">Flip</span><span style="letter-spacing:0.37px"> horizontal</span></span></div>
<div class="row" style="top:1100px"><span class="lbl" style="letter-spacing:0px;margin-left:0px"><span style="letter-spacing:-0.7px">Flip</span><span style="letter-spacing:0.43px"> vertical</span></span></div>
<div class="row" style="top:1236px"><span class="lbl" style="letter-spacing:0px;margin-left:0px"><span style="letter-spacing:-0.68px">Canvas</span><span style="letter-spacing:0.5px"> information</span></span></div>
</div>

<div id="pa">
<h2>Page Assist</h2>
<div id="newpage">New Page</div>
<div id="strip"></div>
<div id="thumb">
<svg class="abs" style="left:22.9px;top:13.5px" width="18" height="22" viewBox="0 0 18 22">
<path d="M9 2C13.3 2 16.3 5.2 16.3 10C16.3 15.4 13.2 19.8 9 19.8C4.8 19.8 1.7 15.4 1.7 10C1.7 5.2 4.7 2 9 2Z" fill="#fdecd6"/>
<ellipse cx="5.7" cy="8.1" rx="1.9" ry="1.1" fill="#4a443c"/><ellipse cx="12.4" cy="8.1" rx="1.9" ry="1.1" fill="#4a443c"/>
</svg>
</div>
<div id="bluebar"></div>
</div>
</body>
</html>
